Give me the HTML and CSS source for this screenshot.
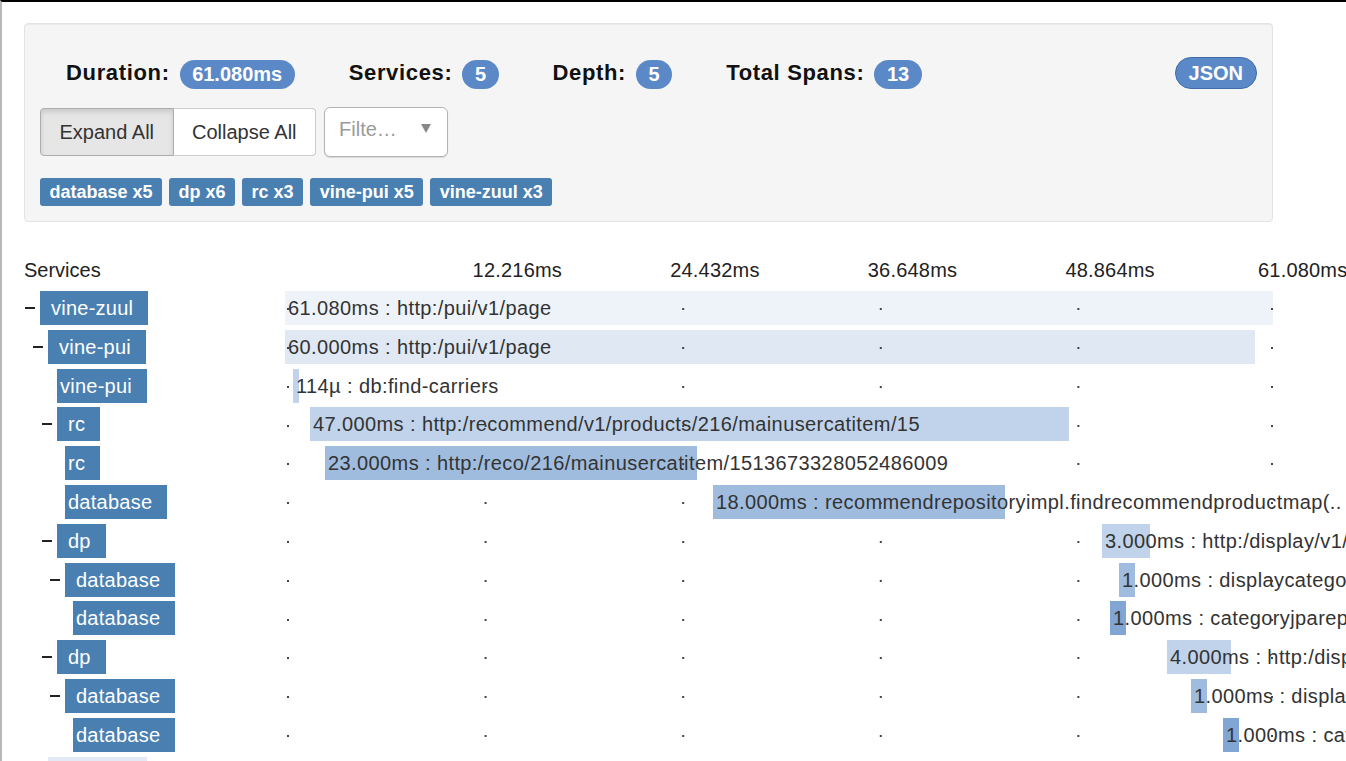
FILE: index.html
```html
<!DOCTYPE html>
<html>
<head>
<meta charset="utf-8">
<link rel="stylesheet" href="styles.css">
</head>
<body>
<div class="page">
  <div class="well">
    <div class="stats">
      <div class="stat"><span class="stat-label">Duration:</span><span class="badge">61.080ms</span></div>
      <div class="stat"><span class="stat-label">Services:</span><span class="badge">5</span></div>
      <div class="stat"><span class="stat-label">Depth:</span><span class="badge">5</span></div>
      <div class="stat"><span class="stat-label">Total Spans:</span><span class="badge">13</span></div>
      <button class="json">JSON</button>
    </div>
    <div class="controls">
      <div class="btn-group">
        <button class="btn active">Expand All</button>
        <button class="btn">Collapse All</button>
      </div>
      <div class="select"><span class="placeholder">Filte…</span><span class="caret"></span></div>
    </div>
    <div class="tags">
      <span class="tag">database x5</span>
      <span class="tag">dp x6</span>
      <span class="tag">rc x3</span>
      <span class="tag">vine-pui x5</span>
      <span class="tag">vine-zuul x3</span>
    </div>
  </div>

  <div class="trace">
    <div class="row head">
      <div class="svc">Services</div>
      <div class="axis">
        <span class="tick" style="left: calc(20% - 10px)">12.216ms</span>
        <span class="tick" style="left: calc(40% - 10px)">24.432ms</span>
        <span class="tick" style="left: calc(60% - 10px)">36.648ms</span>
        <span class="tick" style="left: calc(80% - 10px)">48.864ms</span>
        <span class="tick" style="left: calc(100% - 15px)">61.080ms</span>
      </div>
    </div>

    <div class="row">
      <div class="svc d0"><span class="node exp">vine-zuul</span></div>
      <div class="track"><div class="bar c0" style="left:0%;width:100%">61.080ms : http:/pui/v1/page</div></div>
    </div>
    <div class="row">
      <div class="svc d1"><span class="node exp">vine-pui</span></div>
      <div class="track"><div class="bar c1" style="left:0%;width:98.18%">60.000ms : http:/pui/v1/page</div></div>
    </div>
    <div class="row">
      <div class="svc d2"><span class="node">vine-pui</span></div>
      <div class="track"><div class="bar c2" style="left:0.81%;width:0.61%">114µ : db:find-carriers</div></div>
    </div>
    <div class="row">
      <div class="svc d2"><span class="node exp">rc</span></div>
      <div class="track"><div class="bar c2" style="left:2.53%;width:76.82%">47.000ms : http:/recommend/v1/products/216/mainusercatitem/15</div></div>
    </div>
    <div class="row">
      <div class="svc d3"><span class="node">rc</span></div>
      <div class="track"><div class="bar c3" style="left:4.05%;width:37.65%">23.000ms : http:/reco/216/mainusercatitem/1513673328052486009</div></div>
    </div>
    <div class="row">
      <div class="svc d3"><span class="node">database</span></div>
      <div class="track"><div class="bar c3" style="left:43.32%;width:29.55%">18.000ms : recommendrepositoryimpl.findrecommendproductmap(..</div></div>
    </div>
    <div class="row">
      <div class="svc d2"><span class="node exp">dp</span></div>
      <div class="track"><div class="bar c2" style="left:82.69%;width:4.86%">3.000ms : http:/display/v1/categories</div></div>
    </div>
    <div class="row">
      <div class="svc d3"><span class="node exp">database</span></div>
      <div class="track"><div class="bar c3" style="left:84.41%;width:1.62%">1.000ms : displaycategoryrepository</div></div>
    </div>
    <div class="row">
      <div class="svc d4"><span class="node">database</span></div>
      <div class="track"><div class="bar c4" style="left:83.50%;width:1.62%">1.000ms : categoryjparepository</div></div>
    </div>
    <div class="row">
      <div class="svc d2"><span class="node exp">dp</span></div>
      <div class="track"><div class="bar c2" style="left:89.27%;width:6.48%">4.000ms : http:/display/v1/items</div></div>
    </div>
    <div class="row">
      <div class="svc d3"><span class="node exp">database</span></div>
      <div class="track"><div class="bar c3" style="left:91.70%;width:1.62%">1.000ms : displayitemrepository</div></div>
    </div>
    <div class="row">
      <div class="svc d4"><span class="node">database</span></div>
      <div class="track"><div class="bar c4" style="left:94.94%;width:1.62%">1.000ms : categoryjparepository</div></div>
    </div>
    <div class="row">
      <div class="svc d1"><span class="node faded">vine-pui</span></div>
      <div class="track"></div>
    </div>
  </div>
</div>
</body>
</html>
```

FILE: styles.css
```css
html, body {
  height: 100%;
}
body {
  margin: 0;
  overflow: hidden;
  background: #fff;
  border-top: 2px solid #000;
  border-left: 2px solid #b8b8b8;
  box-sizing: border-box;
  font-family: "Liberation Sans", Arial, sans-serif;
  color: #333;
}
.page {
  padding-left: 22px;
  padding-top: 21px;
}

/* summary well */
.well {
  width: 1249px;
  box-sizing: border-box;
  background: #f5f5f5;
  border: 1px solid #e3e3e3;
  border-radius: 4px;
  box-shadow: inset 0 1px 1px rgba(0,0,0,0.05);
  padding: 33px 15px 15px 15px;
}
.stats {
  display: flex;
  align-items: center;
  height: 32px;
  padding-left: 26px;
}
.stat {
  display: flex;
  align-items: center;
  gap: 10px;
  margin-right: 54px;
}
.stat-label {
  font-weight: bold;
  font-size: 22px;
  letter-spacing: 0.65px;
  color: #111;
}
.badge {
  display: inline-block;
  height: 29px;
  line-height: 29px;
  padding: 0 12.5px;
  border-radius: 15px;
  background: #5b89c8;
  color: #fff;
  font-weight: bold;
  font-size: 20px;
  position: relative;
  top: 1px;
}
.json {
  margin-left: auto;
  height: 32px;
  padding: 0 13px;
  border: 1px solid #3f6ca8;
  border-radius: 16px;
  background: #5b89c8;
  color: #fff;
  font-family: "Liberation Sans", Arial, sans-serif;
  font-weight: bold;
  font-size: 20px;
  line-height: 30px;
}

.controls {
  display: flex;
  align-items: center;
  gap: 8px;
  margin-top: 18px;
  height: 50px;
}
.btn-group {
  display: flex;
}
.btn {
  height: 48px;
  margin: 0;
  padding: 0 18.5px;
  border: 1px solid #ccc;
  background: #fff;
  color: #333;
  font-family: "Liberation Sans", Arial, sans-serif;
  font-size: 20px;
}
.btn:first-child {
  border-radius: 4px 0 0 4px;
}
.btn:last-child {
  border-radius: 0 4px 4px 0;
  border-left: none;
}
.btn.active {
  background: #e6e6e6;
  border-color: #adadad;
  box-shadow: inset 0 3px 5px rgba(0,0,0,0.125);
}
.select {
  width: 124px;
  height: 50px;
  box-sizing: border-box;
  border: 1px solid #b3b3b3;
  border-radius: 6px;
  background: #fff;
  box-shadow: 0 1px 1px rgba(0,0,0,0.12);
  display: flex;
  align-items: center;
  padding: 0 16px 0 14px;
}
.placeholder {
  color: #9a9a9a;
  font-size: 20px;
  position: relative;
  top: -3px;
}
.caret {
  margin-left: auto;
  width: 0;
  height: 0;
  border-left: 5px solid transparent;
  border-right: 5px solid transparent;
  border-top: 9px solid #888;
  position: relative;
  top: -4px;
}

.tags {
  display: flex;
  gap: 7px;
  margin-top: 21px;
}
.tag {
  height: 28px;
  line-height: 28px;
  padding: 0 9.5px;
  border-radius: 3px;
  background: #4a7fb2;
  color: #fff;
  font-weight: bold;
  font-size: 18px;
}

/* trace */
.trace {
  margin-top: 29.6px;
}
.row {
  display: grid;
  grid-template-columns: 261px 988px;
  height: 38.8px;
  align-items: center;
  font-size: 20px;
}
.row.head {
  height: 37px;
  color: #222;
}
.axis {
  position: relative;
  height: 37px;
  line-height: 37px;
}
.tick {
  position: absolute;
  top: 0;
  white-space: nowrap;
  letter-spacing: 0.2px;
}
.svc {
  display: flex;
  align-items: center;
}
.d0 { padding-left: 16px; }
.d1 { padding-left: 24px; }
.d2 { padding-left: 33px; }
.d3 { padding-left: 41px; }
.d4 { padding-left: 49px; }
.node {
  position: relative;
  height: 34px;
  line-height: 34px;
  padding: 0 15px 0 3px;
  background: #4a7fb1;
  color: #fff;
  white-space: nowrap;
  letter-spacing: 0.25px;
}
.node.exp {
  padding-left: 11px;
}
.node.exp::before {
  content: "";
  position: absolute;
  left: -15px;
  top: 16px;
  width: 10px;
  height: 2px;
  background: #222;
}
.node.faded {
  background: #e3eaf3;
  color: #e3eaf3;
  padding-right: 24px;
}
.track {
  position: relative;
  height: 38.8px;
}
.track::after {
  content: "";
  position: absolute;
  left: 0;
  right: 0;
  top: 0;
  bottom: 0;
  z-index: 2;
  background-image:
    linear-gradient(to right, #444 0 2px, transparent 2px),
    linear-gradient(#444, #444);
  background-size: 197.6px 2px, 2px 2px;
  background-repeat: repeat-x, no-repeat;
  background-position: 2px 19.6px, 986px 19.6px;
  pointer-events: none;
}
.bar {
  position: absolute;
  top: 2.4px;
  height: 34px;
  line-height: 34px;
  box-sizing: border-box;
  padding-left: 3px;
  white-space: nowrap;
  color: #333;
  letter-spacing: 0.4px;
  z-index: 1;
}
.c0 { background: #eef3f9; }
.c1 { background: #dfe8f3; }
.c2 { background: #c0d3ea; }
.c3 { background: #9fbcdf; }
.c4 { background: #81a6d3; }
```
